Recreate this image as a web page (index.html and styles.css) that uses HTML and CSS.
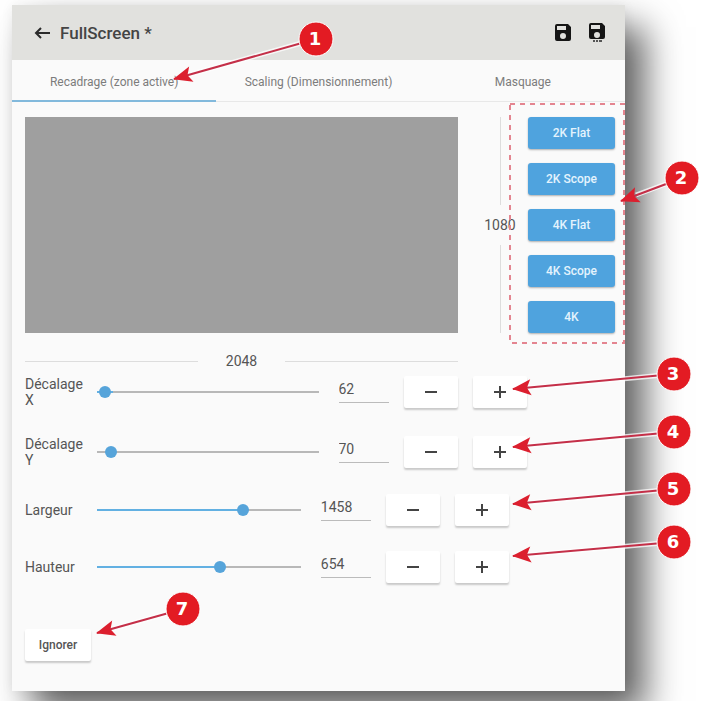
FILE: index.html
```html
<!DOCTYPE html>
<html lang="fr">
<head>
  <meta charset="UTF-8">
  <meta name="viewport" content="width=device-width, initial-scale=1.0">
  <title>FullScreen</title>
  <link rel="stylesheet" href="styles.css">
</head>
<body>
  <main class="card">
    <!-- Header -->
    <header class="toolbar">
      <button class="icon-button" aria-label="Retour">
        <svg width="17" height="14" viewBox="0 0 17 14"><path d="M16 7H2M7 2L2 7l5 5" fill="none" stroke="#2b2b2b" stroke-width="2"/></svg>
      </button>
      <h1>FullScreen *</h1>
      <button class="icon-button" aria-label="Enregistrer">
        <svg width="18" height="20" viewBox="0 0 18 20"><path fill="#151515" fill-rule="evenodd" d="M3 1h11l3 3v12a2 2 0 0 1-2 2H3a2 2 0 0 1-2-2V3a2 2 0 0 1 2-2zM3 3v4h9V3zM9 10a3 3 0 1 0 0 6 3 3 0 0 0 0-6z"/></svg>
      </button>
      <button class="icon-button" aria-label="Enregistrer sous">
        <svg width="18" height="20" viewBox="0 0 18 20"><path fill="#151515" fill-rule="evenodd" d="M3 0h11l3 3v11a2 2 0 0 1-2 2H3a2 2 0 0 1-2-2V2a2 2 0 0 1 2-2zM3 2v4h9V2zM9 9a3 3 0 1 0 0 6 3 3 0 0 0 0-6z"/><path d="M5 18h2M8 18h2M11 18h3" stroke="#555" stroke-width="2"/></svg>
      </button>
    </header>

    <!-- Tabs -->
    <nav class="tabs" role="tablist">
      <button class="tab active" role="tab" aria-selected="true">Recadrage (zone active)</button>
      <button class="tab" role="tab">Scaling (Dimensionnement)</button>
      <button class="tab" role="tab">Masquage</button>
    </nav>

    <div class="content">
      <!-- Preview with its rulers -->
      <section class="crop">
        <div class="preview"></div>
        <div class="ruler vertical"><span>1080</span></div>
        <div class="presets">
          <button class="preset">2K Flat</button>
          <button class="preset">2K Scope</button>
          <button class="preset">4K Flat</button>
          <button class="preset">4K Scope</button>
          <button class="preset">4K</button>
        </div>
        <div class="ruler horizontal"><span>2048</span></div>
      </section>

      <!-- Offset -->
      <section class="fields offset">
        <div class="field">
          <label for="offsetX">Décalage X</label>
          <input class="slider" type="range" value="1" aria-label="Décalage X" style="--fill: 7%">
          <input class="number" id="offsetX" type="text" value="62">
          <button class="step" aria-label="Moins"><svg width="14" height="14"><path d="M1 7h12"/></svg></button>
          <button class="step" aria-label="Plus"><svg width="14" height="14"><path d="M1 7h12M7 1v12"/></svg></button>
        </div>
        <div class="field">
          <label for="offsetY">Décalage Y</label>
          <input class="slider" type="range" value="4" aria-label="Décalage Y" style="--fill: 0%">
          <input class="number" id="offsetY" type="text" value="70">
          <button class="step" aria-label="Moins"><svg width="14" height="14"><path d="M1 7h12"/></svg></button>
          <button class="step" aria-label="Plus"><svg width="14" height="14"><path d="M1 7h12M7 1v12"/></svg></button>
        </div>
      </section>

      <!-- Size -->
      <section class="fields size">
        <div class="field">
          <label for="cropWidth">Largeur</label>
          <input class="slider" type="range" value="73" aria-label="Largeur" style="--fill: 71%">
          <input class="number" id="cropWidth" type="text" value="1458">
          <button class="step" aria-label="Moins"><svg width="14" height="14"><path d="M1 7h12"/></svg></button>
          <button class="step" aria-label="Plus"><svg width="14" height="14"><path d="M1 7h12M7 1v12"/></svg></button>
        </div>
        <div class="field">
          <label for="cropHeight">Hauteur</label>
          <input class="slider" type="range" value="61" aria-label="Hauteur" style="--fill: 61%">
          <input class="number" id="cropHeight" type="text" value="654">
          <button class="step" aria-label="Moins"><svg width="14" height="14"><path d="M1 7h12"/></svg></button>
          <button class="step" aria-label="Plus"><svg width="14" height="14"><path d="M1 7h12M7 1v12"/></svg></button>
        </div>
      </section>

      <button class="discard">Ignorer</button>
    </div>
  </main>

  <!-- Numbered callouts drawn over the page -->
  <svg class="callouts" width="701" height="701" viewBox="0 0 701 701">
    <defs>
      <marker id="head" markerUnits="userSpaceOnUse" markerWidth="26" markerHeight="24" refX="20" refY="12" orient="auto" overflow="visible">
        <path d="M21 12L2 4l4 8-4 8z" fill="#dc1f2e"/>
      </marker>
    </defs>
    <rect class="frame" x="510" y="104" width="114" height="239"/>
    <g class="halo">
      <path d="M316 39L188 75"/>
      <path d="M682 178L636 195"/>
      <path d="M674 374L528 388"/>
      <path d="M674 432L527 446"/>
      <path d="M674 489L527 503"/>
      <path d="M674 542L527 555"/>
      <path d="M183 609L112 629"/>
    </g>
    <g class="arrow">
      <path d="M316 39L174 79"/>
      <path d="M682 178L621 201"/>
      <path d="M674 374L513 389"/>
      <path d="M674 432L513 447"/>
      <path d="M674 489L513 504"/>
      <path d="M674 542L513 556"/>
      <path d="M183 609L97 633"/>
    </g>
    <g class="badge">
      <circle cx="316" cy="39" r="17"/>
      <circle cx="682" cy="178" r="17"/>
      <circle cx="674" cy="374" r="17"/>
      <circle cx="674" cy="432" r="17"/>
      <circle cx="674" cy="489" r="17"/>
      <circle cx="674" cy="542" r="17"/>
      <circle cx="183" cy="609" r="17"/>
    </g>
    <g class="badge-text">
      <text x="315" y="45">1</text>
      <text x="681" y="184">2</text>
      <text x="673" y="380">3</text>
      <text x="673" y="438">4</text>
      <text x="673" y="495">5</text>
      <text x="673" y="548">6</text>
      <text x="182" y="615">7</text>
    </g>
  </svg>
</body>
</html>
```

FILE: styles.css
```css
* {
  margin: 0;
  padding: 0;
  box-sizing: border-box;
}

body {
  position: relative;
  padding: 5px 76px 10px 12px;
  font-family: Roboto, "Liberation Sans", sans-serif;
  font-size: 14px;
  color: #555;
  background-color: #fff;
}

button {
  border: none;
  font-family: inherit;
  cursor: pointer;
}

.card {
  background-color: #fafafa;
  box-shadow: 20px 22px 34px rgba(0, 0, 0, 0.62), 0 0 12px rgba(0, 0, 0, 0.06);
}

/* Header */
.toolbar {
  display: flex;
  align-items: center;
  gap: 16px;
  height: 55px;
  padding: 0 19px 0 22px;
  background-color: #e1e1de;
}

.toolbar h1 {
  flex: 1;
  margin-left: -7px;
  font-size: 17px;
  font-weight: 500;
  color: #444;
}

.icon-button {
  display: flex;
  background: none;
}

/* Tabs */
.tabs {
  display: flex;
  height: 42px;
  border-bottom: 1px solid #e8e8e8;
}

.tab {
  flex: 1;
  height: 42px;
  padding-top: 3px;
  border-bottom: 2px solid transparent;
  font-size: 12px;
  color: #7c7c7c;
  background: none;
}

.tab.active {
  border-bottom-color: #82b9dc;
}

.content {
  padding: 15px 10px 30px 13px;
}

/* Preview and rulers */
.crop {
  display: grid;
  grid-template-columns: 1fr 32px 87px;
  column-gap: 12px;
  row-gap: 20px;
}

.preview {
  margin-right: 14px;
  background-color: #9f9f9f;
}

.ruler {
  display: flex;
  align-items: center;
  line-height: 16px;
}

.ruler::before,
.ruler::after {
  content: "";
  flex: 1;
  background-color: #ddd;
}

.horizontal {
  gap: 28px;
  margin-right: 14px;
}

.horizontal::before,
.horizontal::after {
  height: 1px;
}

.vertical {
  flex-direction: column;
  gap: 12px;
}

.vertical::before,
.vertical::after {
  width: 1px;
}

.presets {
  display: flex;
  flex-direction: column;
  gap: 14px;
}

.preset {
  height: 32px;
  border-radius: 3px;
  font-size: 12px;
  font-weight: 500;
  color: #e4f3fd;
  background-color: #4fa3de;
  box-shadow: 0 1px 2px rgba(0, 0, 0, 0.3);
}

/* Sliders */
.fields {
  display: flex;
  flex-direction: column;
}

.offset {
  width: 85%;
  gap: 28px;
  margin-top: 7px;
}

.size {
  width: 82%;
  gap: 25px;
  margin-top: 26px;
}

.field {
  display: flex;
  align-items: center;
  gap: 15px;
  height: 32px;
}

.field label {
  width: 57px;
  line-height: 16px;
}

.slider {
  flex: 1;
  min-width: 0;
  height: 12px;
  margin-right: 5px;
  appearance: none;
  background: none;
}

.slider::-webkit-slider-runnable-track {
  height: 2px;
  background: linear-gradient(to right, #62b0e2 var(--fill), #b8b8b8 var(--fill));
}

.slider::-webkit-slider-thumb {
  appearance: none;
  width: 12px;
  height: 12px;
  margin-top: -5px;
  border-radius: 50%;
  background-color: #56a4da;
}

.number {
  width: 50px;
  height: 22px;
  padding-bottom: 6px;
  border: none;
  border-bottom: 1px solid #bbb;
  font: inherit;
  color: #555;
  background: none;
}

.step {
  display: flex;
  align-items: center;
  justify-content: center;
  width: 54px;
  height: 32px;
}

.step svg {
  fill: none;
  stroke: #444;
  stroke-width: 2;
}

.step,
.discard {
  border-radius: 2px;
  background-color: #fff;
  box-shadow: 0 2px 2px rgba(0, 0, 0, 0.2);
}

.discard {
  display: block;
  width: 66px;
  height: 32px;
  margin-top: 46px;
  font-size: 12px;
  font-weight: 500;
  color: #555;
}

/* Callouts */
.callouts {
  position: absolute;
  top: 0;
  left: 0;
  pointer-events: none;
}

.frame {
  fill: none;
  stroke: #e48590;
  stroke-width: 2;
  stroke-dasharray: 5 5;
}

.halo {
  stroke: #fff;
  stroke-width: 5;
  opacity: 0.75;
}

.arrow {
  stroke: #c42f48;
  stroke-width: 2;
}

.arrow path {
  marker-end: url(#head);
}

.badge {
  fill: #e31b23;
  stroke: #fff;
  stroke-width: 1;
}

.badge-text {
  font-family: "DejaVu Sans", sans-serif;
  font-size: 18px;
  font-weight: bold;
  text-anchor: middle;
  fill: #fff;
}
```
